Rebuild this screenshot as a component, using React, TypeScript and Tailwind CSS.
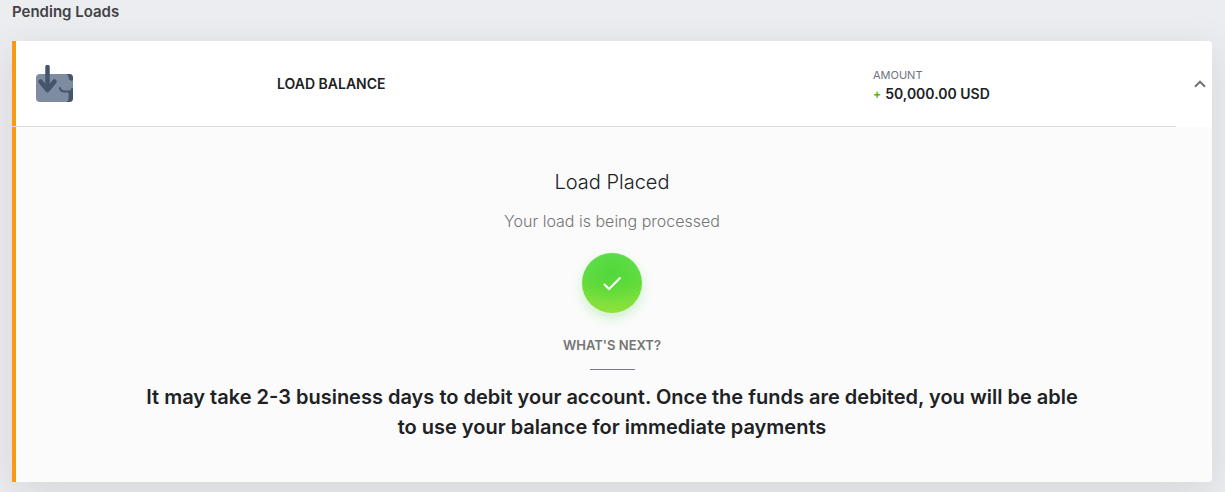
import { useState } from "react";

function WalletIcon() {
  return (
    <svg width="38" height="38" viewBox="0 0 38 38" aria-hidden="true">
      <rect x="0" y="9" width="37" height="28" rx="4" fill="#7e8ca2" />
      <path d="M30.500 9H33a4 4 0 0 1 4 4v2.500c-2.500.5-4.500-.5-4.500-3 0-1.500-.6-2.700-2-3.500z" fill="#46556b" />
      <path d="M32.500 26H35c1 0 2-.6 2-1.500V33a4 4 0 0 1-4 4h-2.500c1.500-.8 2-2 2-3.500z" fill="#46556b" />
      <path d="M24 23c.4 2.500 2 3.500 4.500 3.500H33c1.800 0 3-.8 3-2.500" fill="none" stroke="#46556b" strokeWidth="2" strokeLinecap="round" />
      <path d="M11.500 2v22" stroke="#46556b" strokeWidth="4.500" strokeLinecap="round" />
      <path d="M4.500 16.500l7 8.500 7-8.500" fill="none" stroke="#46556b" strokeWidth="4.500" strokeLinecap="round" strokeLinejoin="round" />
    </svg>
  );
}

function CheckBadge() {
  return (
    <div className="flex h-[60px] w-[60px] items-center justify-center rounded-full bg-[radial-gradient(circle_at_50%_30%,#52d83a_0%,#52d83a00_65%),linear-gradient(to_bottom,#62df58_0%,#64dc3b_50%,#90e23c_100%)] shadow-[0_5px_12px_rgba(100,220,90,0.3)]">
      <svg width="20" height="16" viewBox="0 0 20 16" fill="none" aria-hidden="true">
        <path d="M2 9l5 5L18.500 2.500" stroke="#fff" strokeWidth="2.200" />
      </svg>
    </div>
  );
}

interface LoadCardProps {
  title: string;
  amount: string;
}

function LoadCard({ title, amount }: LoadCardProps) {
  const [open, setOpen] = useState(true);

  return (
    <article className="overflow-hidden rounded-r bg-white shadow-[0_10px_40px_rgba(50,55,58,0.13)]">
      <header className="flex">
        <div className="flex-1 border-b border-[#dcdcde]">
          <div className="grid h-[85px] grid-cols-[261fr_596fr_303fr] items-center border-l-4 border-[#fa9917]">
            <div className="pl-5">
              <WalletIcon />
            </div>
            <h2 className="text-sm font-semibold text-[#202124]">{title}</h2>
            <div className="pt-1">
              <p className="text-[11px] leading-4 text-[#6b747c]">AMOUNT</p>
              <p className="flex items-center gap-1 text-sm leading-[22px] font-semibold text-[#202124]">
                <span className="text-xs leading-[22px] font-bold text-[#65b20a]">+</span>
                <span>{amount}</span>
              </p>
            </div>
          </div>
        </div>
        <button
          type="button"
          aria-label="Toggle details"
          aria-expanded={open}
          onClick={() => setOpen(!open)}
          className="flex w-9 items-center justify-center pl-3 text-[#757575]"
        >
          <svg
            width="12"
            height="8"
            viewBox="0 0 12 8"
            fill="none"
            aria-hidden="true"
            className={open ? "" : "rotate-180"}
          >
            <path d="M1 6.700l5-5 5 5" stroke="currentColor" strokeWidth="2" />
          </svg>
        </button>
      </header>

      {open && (
        <div className="flex flex-col items-center border-l-4 border-[#fa9917] bg-[#fbfbfb] pt-10 pr-1 pb-10 text-center">
          <h3 className="text-xl leading-[30px] font-light text-[#202124]">Load Placed</h3>
          <p className="mt-3 mb-5 text-base font-light text-[#757575]">Your load is being processed</p>
          <CheckBadge />
          <p className="mt-[22px] text-[13px] leading-5 font-semibold text-[#757575]">WHAT'S NEXT?</p>
          <div className="mt-3.5 mb-3 h-px w-[45px] bg-[#757a86]" />
          <p className="max-w-[948px] text-xl leading-[30px] font-semibold text-[#202124]">
            It may take 2-3 business days to debit your account. Once the funds are debited, you will be able
            to use your balance for immediate payments
          </p>
        </div>
      )}
    </article>
  );
}

export default function App() {
  return (
    <main className="min-h-screen overflow-hidden bg-[#ecedf0] pr-[13px] pl-3 font-['Inter',sans-serif]">
      <h1 className="mb-[17px] text-[15px] leading-6 font-semibold text-[#424245]">Pending Loads</h1>
      <LoadCard title="LOAD BALANCE" amount="50,000.00 USD" />
    </main>
  );
}
